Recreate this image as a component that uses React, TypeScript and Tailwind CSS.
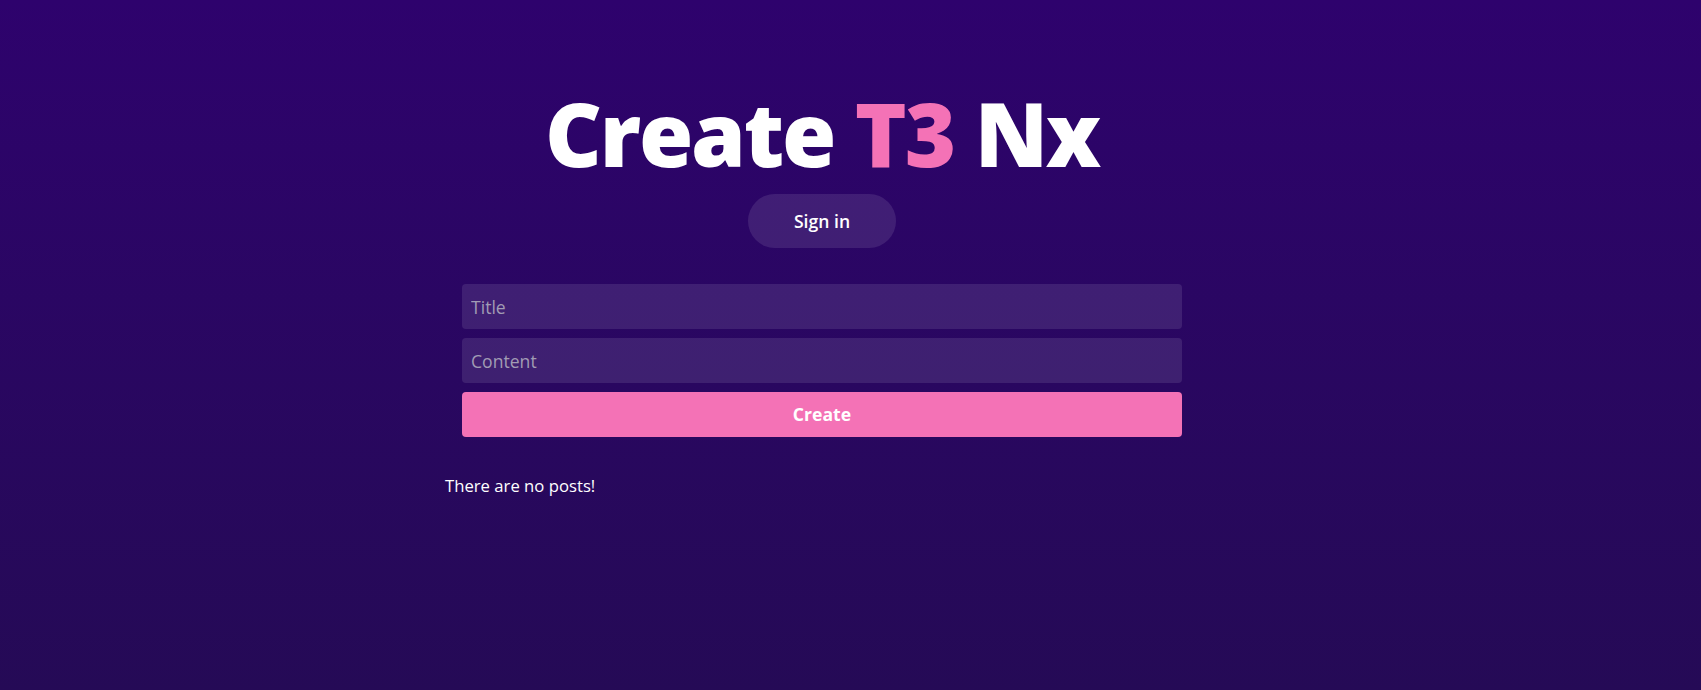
import React from "react";

export default function App() {
  const font = { fontFamily: '"Open Sans", "Noto Sans", sans-serif' };
  return (
    <main
      className="flex h-[690px] w-full flex-col bg-gradient-to-b from-[#2e026d] to-[#250a56] text-white"
      style={font}
    >
      <div className="mt-[89px] flex w-[1644px] flex-col items-center">
        <h1 className="text-[88px] leading-[88px] font-extrabold tracking-[-0.025em]">
          Create <span className="text-[#f472b6]">T3</span> Nx
        </h1>
        <button className="mt-[17px] flex h-[54px] w-[148px] items-center justify-center rounded-full bg-white/10 text-[17.6px] font-semibold text-white">
          Sign in
        </button>
        <div className="mt-[19px] flex w-[754px] flex-col p-[17px]">
          <input
            className="mb-[9px] h-[45px] rounded-[4px] bg-white/10 px-[9px] text-[17.6px] text-white outline-none placeholder:text-[#a19cb4]"
            placeholder="Title"
          />
          <input
            className="mb-[9px] h-[45px] rounded-[4px] bg-white/10 px-[9px] text-[17.6px] text-white outline-none placeholder:text-[#a19cb4]"
            placeholder="Content"
          />
          <button className="h-[45px] rounded-[4px] bg-[#f472b6] text-[17.6px] font-bold text-white">
            Create
          </button>
        </div>
        <div className="mt-[19px] w-[754px]">
          <p className="text-[16.7px] leading-[26.4px]">There are no posts!</p>
        </div>
      </div>
    </main>
  );
}
